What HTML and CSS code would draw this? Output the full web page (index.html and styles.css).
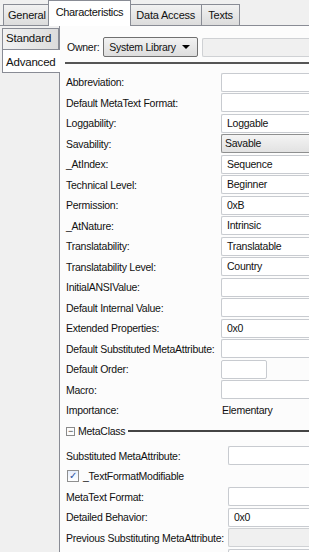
FILE: index.html
```html
<!DOCTYPE html>
<html lang="en">
<head>
    <meta charset="UTF-8">
    <title>Characteristics</title>
    <link rel="stylesheet" href="styles.css">
</head>
<body>
    <div class="tabs">
        <div class="tab">General</div>
        <div class="tab active">Characteristics</div>
        <div class="tab">Data Access</div>
        <div class="tab">Texts</div>
    </div>
    <div class="page">
        <div class="side">
            <div class="vtab">Standard</div>
            <div class="vtab active">Advanced</div>
        </div>
        <div class="panel">
            <div class="owner">
                <span>Owner:</span>
                <div class="select">System Library <span class="arrow"></span></div>
                <div class="field grey"></div>
            </div>
            <div class="rule"></div>

            <div class="row"><label>Abbreviation:</label><div class="field"></div></div>
            <div class="row"><label>Default MetaText Format:</label><div class="field"></div></div>
            <div class="row"><label>Loggability:</label><div class="field">Loggable</div></div>
            <div class="row"><label>Savability:</label><div class="field combo">Savable</div></div>
            <div class="row"><label>_AtIndex:</label><div class="field">Sequence</div></div>
            <div class="row"><label>Technical Level:</label><div class="field">Beginner</div></div>
            <div class="row"><label>Permission:</label><div class="field">0xB</div></div>
            <div class="row"><label>_AtNature:</label><div class="field">Intrinsic</div></div>
            <div class="row"><label>Translatability:</label><div class="field">Translatable</div></div>
            <div class="row"><label>Translatability Level:</label><div class="field">Country</div></div>
            <div class="row"><label>InitialANSIValue:</label><div class="field"></div></div>
            <div class="row"><label>Default Internal Value:</label><div class="field"></div></div>
            <div class="row"><label>Extended Properties:</label><div class="field">0x0</div></div>
            <div class="row"><label>Default Substituted MetaAttribute:</label><div class="field"></div></div>
            <div class="row"><label>Default Order:</label><div class="field short"></div></div>
            <div class="row"><label>Macro:</label><div class="field"></div></div>
            <div class="row"><label>Importance:</label><div class="plain">Elementary</div></div>

            <div class="group">
                <span class="toggle">&minus;</span>
                <span>MetaClass</span>
                <span class="line"></span>
            </div>

            <div class="meta">
                <div class="row"><label>Substituted MetaAttribute:</label><div class="field"></div></div>
                <div class="row check"><span class="box">&#10003;</span><span>_TextFormatModifiable</span></div>
                <div class="row"><label>MetaText Format:</label><div class="field"></div></div>
                <div class="row"><label>Detailed Behavior:</label><div class="field">0x0</div></div>
                <div class="row"><label>Previous Substituting MetaAttribute:</label><div class="field grey"></div></div>
                <div class="row"><label></label><div class="field"></div></div>
            </div>
        </div>
    </div>
</body>
</html>
```

FILE: styles.css
```css
* {
  margin: 0;
  padding: 0;
  box-sizing: border-box;
}

body {
  width: 309px;
  height: 552px;
  overflow: hidden;
  background: #fcfcfc;
  font-family: "Liberation Sans", Arial, sans-serif;
  font-size: 10.5px;
  letter-spacing: -0.25px;
  color: #111;
}

.tabs {
  display: flex;
  height: 26px;
  padding-left: 3px;
  align-items: flex-end;
  background: #f0f0f0;
  border-bottom: 1px solid #898c95;
}

.tab {
  height: 21px;
  padding: 0 6px;
  line-height: 20px;
  font-size: 11px;
  letter-spacing: -0.2px;
  border: 1px solid #898c95;
  border-bottom: none;
  border-right: none;
  background: linear-gradient(#f2f2f2, #dcdcdc);
}

.tab:first-child {
  padding: 0 4px;
}

.tab:last-child {
  border-right: 1px solid #898c95;
}

.tab.active {
  height: 26px;
  margin: 0 -1px -1px -2px;
  padding: 0 7px;
  line-height: 22px;
  letter-spacing: -0.35px;
  background: #fff;
  border-right: 1px solid #898c95;
  position: relative;
}

.tab.active + .tab {
  border-left: none;
}

.page {
  display: flex;
  height: 526px;
}

.side {
  width: 60px;
  padding-top: 2px;
  background: #f0f0f0;
  border-right: 1px solid #898c95;
}

.vtab {
  height: 21px;
  margin-left: 2px;
  padding-left: 3px;
  line-height: 19px;
  font-size: 11.5px;
  letter-spacing: -0.2px;
  background: linear-gradient(90deg, #f2f2f2, #dcdcdc);
  border: 1px solid #898c95;
  border-bottom: none;
}

.vtab.active {
  height: 24px;
  line-height: 24px;
  margin-right: -1px;
  background: #fff;
  border-right: none;
  border-bottom: 1px solid #898c95;
}

.panel {
  flex: 1;
  padding-left: 6px;
  background: #fcfcfc;
}

.owner {
  display: flex;
  align-items: center;
  gap: 4px;
  margin-top: 11px;
  height: 20px;
  padding-left: 1px;
}

.select {
  width: 95px;
  height: 20px;
  padding-left: 5px;
  line-height: 18px;
  border: 1px solid #707070;
  border-radius: 2px;
  background: linear-gradient(#f2f2f2, #dddddd);
  position: relative;
}

.arrow {
  position: absolute;
  right: 7px;
  top: 7px;
  border: 4px solid transparent;
  border-top: 4px solid #000;
  border-bottom: none;
}

.owner .field {
  flex: 1;
}

.rule {
  height: 2px;
  margin: 5px 0 8px -1px;
  background: #555;
}

.row {
  display: flex;
  align-items: center;
  height: 20.5px;
}

.row label {
  width: 155px;
  flex: none;
  white-space: nowrap;
}

.field {
  flex: 1;
  height: 19px;
  padding-left: 5px;
  line-height: 17px;
  background: #fff;
  border: 1px solid #c8cbd0;
  border-right: none;
  border-radius: 2px 0 0 2px;
}

.field.grey {
  background: #f0f0f0;
  border-color: #cfd1d4;
}

.field.combo {
  padding-left: 3px;
  border-color: #8e8f8f;
  background: linear-gradient(#f4f4f4, #e2e2e2);
}

.field.short {
  flex: none;
  width: 46px;
  border-right: 1px solid #c8cbd0;
  border-radius: 2px;
}

.plain {
  padding-left: 1px;
}

.group {
  display: flex;
  align-items: center;
  gap: 3px;
  height: 19px;
  margin-top: 1px;
}

.toggle {
  width: 9px;
  height: 9px;
  border: 1px solid #8a8a8a;
  font-size: 9px;
  line-height: 6px;
  text-align: center;
  color: #333;
}

.group .line {
  flex: 1;
  height: 2px;
  background: #444;
}

.meta {
  padding-top: 5px;
}

.meta .row label {
  width: 162px;
}

.row.check {
  gap: 4px;
}

.box {
  width: 12px;
  height: 12px;
  margin-left: 1px;
  border: 1px solid #8f8f8f;
  background: linear-gradient(#e6eefc, #fff);
  color: #2a4fa0;
  font-size: 10px;
  line-height: 10px;
  text-align: center;
}
```
